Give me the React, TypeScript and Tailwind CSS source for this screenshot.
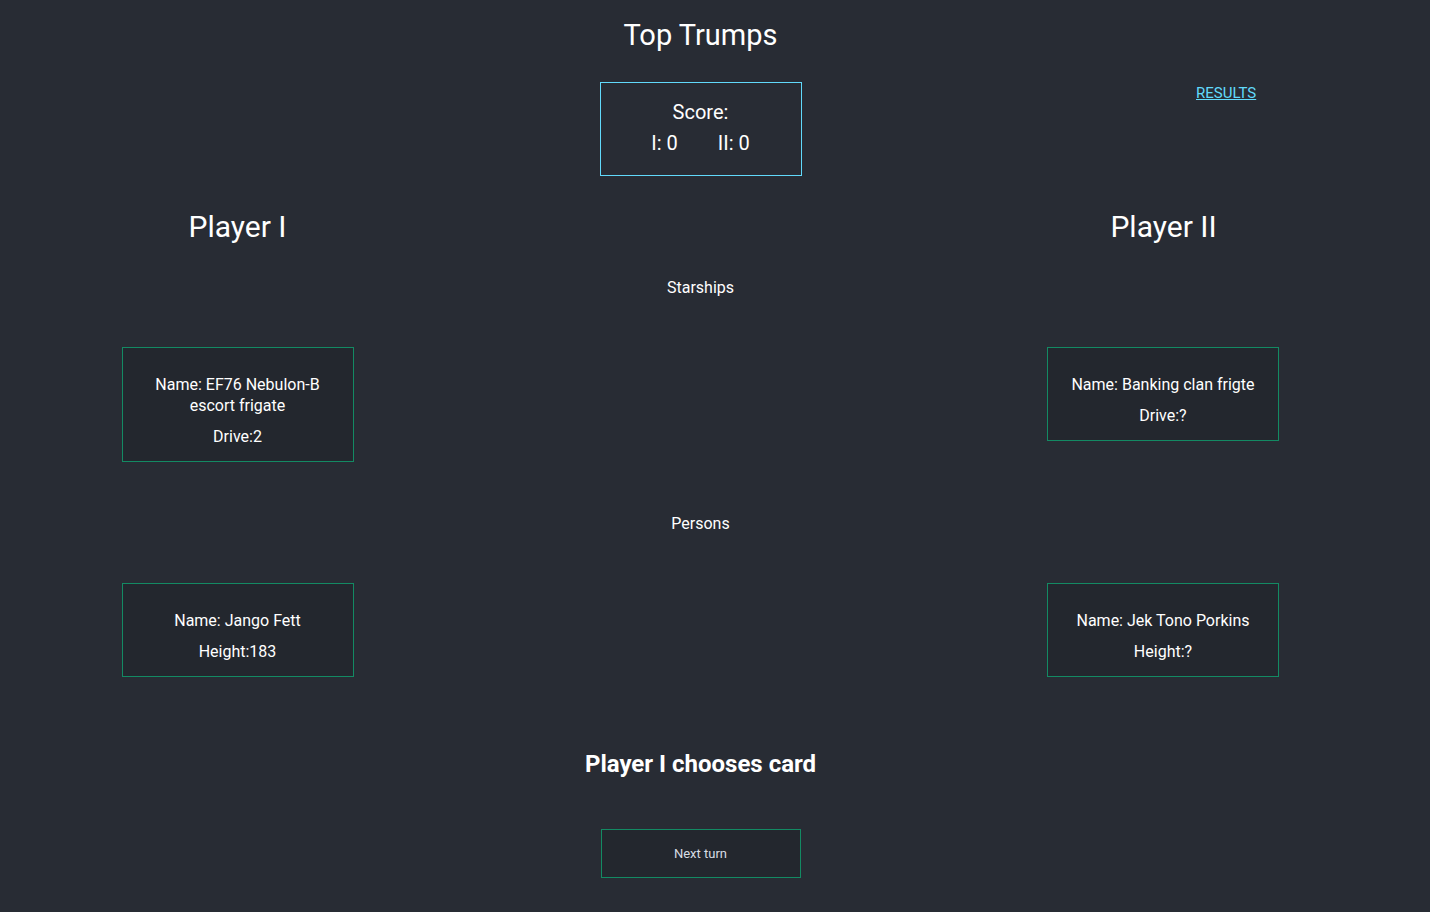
import React from "react";

function Card({ name, stat }: { name: string; stat: string }) {
  return (
    <div className="w-[232px] border border-[#138a63] bg-[#23272e] px-[20px] pt-[26px] pb-[14px] text-center text-[16px] leading-[21px] text-white">
      <p>Name: {name}</p>
      <p className="mt-[10px]">{stat}</p>
    </div>
  );
}

export default function App() {
  return (
    <div
      className="min-h-screen bg-[#282c34] text-white"
      style={{ fontFamily: "Roboto, 'Liberation Sans', sans-serif" }}
    >
      <div className="w-[1401px]">
        <h1 className="pt-[19px] text-center text-[29px] leading-[33px] font-normal">Top Trumps</h1>

        <div className="mt-[30px] grid grid-cols-[475px_451px_475px]">
          <div />
          <div className="flex justify-center">
            <div className="h-[94px] w-[202px] border border-[#61dafb] pt-[14px] text-center text-[20px] leading-[30px]">
              <p>Score:</p>
              <div className="mt-[1px] flex justify-center gap-[40px]">
                <span>I: 0</span>
                <span>II: 0</span>
              </div>
            </div>
          </div>
          <div className="pl-[270px] pt-[3px]">
            <a href="#" className="block w-fit text-[15px] leading-[16px] text-[#61dafb] underline">
              RESULTS
            </a>
          </div>
        </div>

        <div className="mt-[33px] grid grid-cols-[475px_451px_475px]">
          <h2 className="text-center text-[30px] leading-[35px] font-normal">Player I</h2>
          <div />
          <h2 className="text-center text-[30px] leading-[35px] font-normal">Player II</h2>
        </div>

        <p className="mt-[34px] text-center text-[16px] leading-[19px]">Starships</p>

        <div className="mt-[50px] grid grid-cols-[475px_450px_476px] items-start">
          <div className="flex justify-center">
            <Card name="EF76 Nebulon-B escort frigate" stat="Drive:2" />
          </div>
          <div />
          <div className="flex justify-center">
            <Card name="Banking clan frigte" stat="Drive:?" />
          </div>
        </div>

        <p className="mt-[52px] text-center text-[16px] leading-[19px]">Persons</p>

        <div className="mt-[50px] grid grid-cols-[475px_450px_476px] items-start">
          <div className="flex justify-center">
            <Card name="Jango Fett" stat="Height:183" />
          </div>
          <div />
          <div className="flex justify-center">
            <Card name="Jek Tono Porkins" stat="Height:?" />
          </div>
        </div>

        <h3 className="mt-[73px] text-center text-[24px] leading-[28px] font-bold">Player I chooses card</h3>

        <div className="mt-[51px] flex justify-center pb-[34px]">
          <button className="h-[49px] w-[200px] border border-[#138a63] bg-[#23272e] text-[13px] text-[#d8dde4]">
            Next turn
          </button>
        </div>
      </div>
    </div>
  );
}
